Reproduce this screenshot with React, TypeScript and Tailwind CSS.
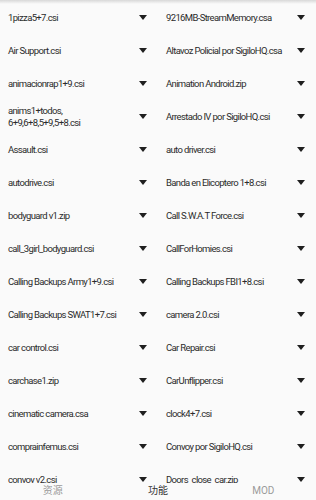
const leftFiles = [
  "1pizza5+7.csi",
  "Air Support.csi",
  "animacionrap1+9.csi",
  "anims1+todos,\u200B6+9,6+8,5+9,5+8.csi",
  "Assault.csi",
  "autodrive.csi",
  "bodyguard v1.zip",
  "call_3girl_bodyguard.csi",
  "Calling Backups Army1+9.csi",
  "Calling Backups SWAT1+7.csi",
  "car control.csi",
  "carchase1.zip",
  "cinematic camera.csa",
  "comprainfemus.csi",
  "convoy v2.csi",
];

const rightFiles = [
  "9216MB-StreamMemory.csa",
  "Altavoz Policial por SigiloHQ.csa",
  "Animation Android.zip",
  "Arrestado IV por SigiloHQ.csi",
  "auto driver.csi",
  "Banda en Elicoptero 1+8.csi",
  "Call S.W.A.T Force.csi",
  "CallForHomies.csi",
  "Calling Backups FBI1+8.csi",
  "camera 2.0.csi",
  "Car Repair.csi",
  "CarUnflipper.csi",
  "clock4+7.csi",
  "Convoy por SigiloHQ.csi",
  "Doors_close_car.zip",
];

function FileCell({ name }: { name: string }) {
  return (
    <div className="h-[33px] flex items-center justify-between pl-2 pr-[11px]">
      <span className="text-[9.5px] leading-[12px] tracking-[-0.65px] text-[#2b2b2b] max-w-[124px]">
        {name}
      </span>
      <svg width="8" height="5" viewBox="0 0 8 5" className="shrink-0">
        <path d="M0 0 H8 L4 5 Z" fill="#1f1f1f" />
      </svg>
    </div>
  );
}

export default function App() {
  const rows = leftFiles.map((left, i) => [left, rightFiles[i]]);

  return (
    <div
      className="relative w-[316px] h-[500px] flex flex-col bg-[#fafafa] overflow-hidden"
      style={{ fontFamily: "Roboto, 'Noto Sans CJK SC', sans-serif" }}
    >
      <div className="absolute top-0 left-0 right-0 h-[4px] bg-gradient-to-b from-[#d8d8d8] to-transparent" />

      <div className="flex-1 overflow-hidden pt-px">
        <div className="grid grid-cols-2">
          {rows.map(([left, right]) => (
            <div key={left} className="contents">
              <FileCell name={left} />
              <FileCell name={right} />
            </div>
          ))}
        </div>
      </div>

      <div className="h-[17px] grid grid-cols-3 text-[10px] leading-[16px] text-center bg-[#fafafa]">
        <span className="text-[#9a9a9a]">资源</span>
        <span className="text-[#333]">功能</span>
        <span className="text-[#9a9a9a]">MOD</span>
      </div>
    </div>
  );
}
